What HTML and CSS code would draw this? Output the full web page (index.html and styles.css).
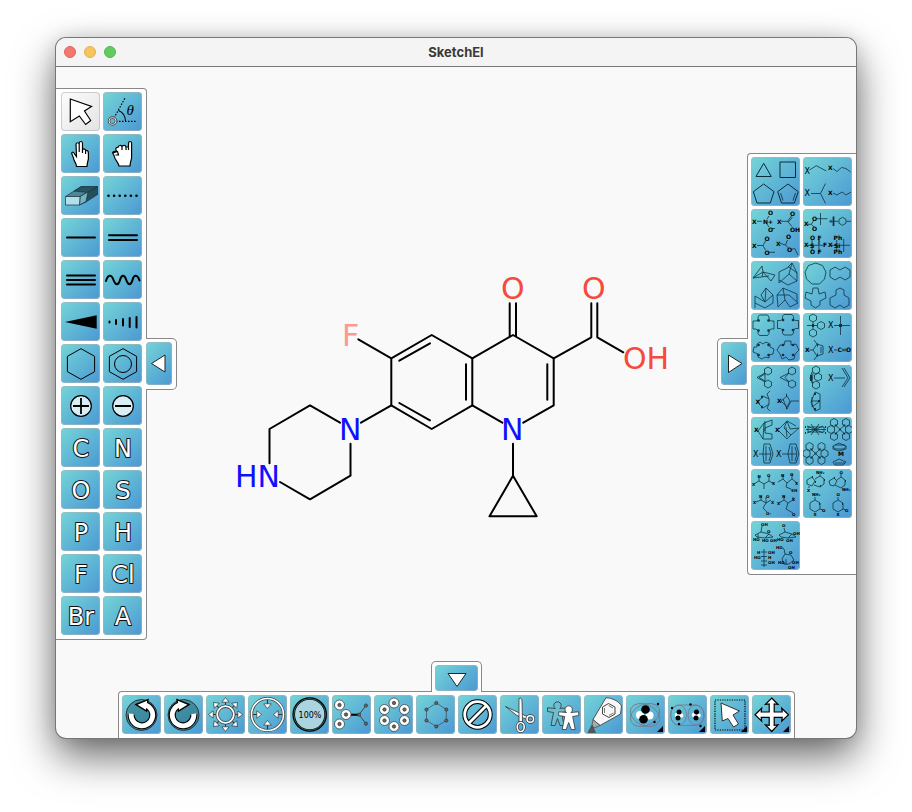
FILE: index.html
```html
<!DOCTYPE html>
<html lang="en">
<head>
<meta charset="utf-8">
<title>SketchEl</title>
<link rel="stylesheet" href="styles.css">
</head>
<body>
<svg class="defs" width="0" height="0" aria-hidden="true">
  <defs>
    <symbol id="out" viewBox="0 0 39 39" overflow="visible"><path d="M19.5 11.500V7" stroke="#333"/><path d="M19.500 2.500l3.600 4.700h-7.200z" fill="#fff" stroke="#333" stroke-width=".7"/></symbol>
    <symbol id="in" viewBox="0 0 39 39" overflow="visible"><path d="M19.500 4v6" stroke="#333" stroke-width="1.200"/><path d="M19.500 13.500l3.800-4.700h-7.600z" fill="#fff" stroke="#333" stroke-width=".7"/></symbol>
    <g id="atom"><circle r="5" fill="#fff" stroke="#444" stroke-width=".8"/><circle r="1.700" fill="#666" stroke="#222" stroke-width=".6"/></g>
    <circle id="dot" r="1.600" fill="#666" stroke="#222" stroke-width=".6"/>
    <path id="more" d="M37 31v6h-6z" fill="#000" stroke="none"/>
    <path id="hex" d="M0-4l3.500 2v4l-3.500 2l-3.500-2v-4z"/>
    <path id="person" d="M-2.200 4.500L-10 3.800V7.500L-4 8.500L-6.500 21.500H-2.500L0 14.500L2.500 21.500H6.500L4 8.500L10 7.500V3.800L2.200 4.500A3.700 3.700 0 1 0-2.200 4.500z"/>
    <path id="crown" d="M-4-10.500h8l1.500 2v3l2 1h3v8h-3l-2 1.500v3l-1.500 2h-8l-1.500-2v-3l-2-1.500h-3v-8h3l2-1v-3z"/>
    <path id="od" d="M-5-5h.1M5-5h.1M-5 5h.1M5 5h.1" stroke-width="2.600" stroke-linecap="round"/>
    <g id="porph"><use href="#hex" x="-6" y="-7"/><use href="#hex" x="6" y="-7"/><use href="#hex" x="-6" y="7"/><use href="#hex" x="6" y="7"/><use href="#hex" x="-9" y="0"/><use href="#hex" x="9" y="0"/><path d="M-5-5L5 5M5-5L-5 5"/><path d="M-4-4h.1M4-4h.1M-4 4h.1M4 4h.1M0 0h.1" stroke-width="2" stroke-linecap="round"/></g>
  </defs>
</svg>

<div class="window">
  <header class="titlebar">
    <div class="lights"><span class="light red"></span><span class="light amber"></span><span class="light green"></span></div>
    <h1>SketchEl</h1>
  </header>

  <main class="stage">
    <section class="dock dock-left" aria-label="Tools">
      <div class="panel tools">
        <button class="tool selected" aria-label="Select"><svg viewBox="0 0 39 39"><path d="M9.300 7L30.500 14.500L23.500 19L29.700 28.500L24.700 32.500L18.300 24L9.300 29.700z" fill="#fff" stroke-width="1.200"/></svg></button>
        <button class="tool" aria-label="Rotate"><svg viewBox="0 0 39 39"><path d="M11 26L22.300 5.500M13 29.300H34" stroke-width="1.200" stroke-dasharray="1.500 1.500"/><path d="M15.500 18.500Q22 21 22.500 29" stroke-width="1.100"/><circle cx="9.500" cy="29" r="3.500" stroke="#444" stroke-width="2.400"/><circle cx="9.500" cy="29" r="3.500" stroke="#ddd"/><text class="theta" x="23.500" y="23">θ</text></svg></button>
        <button class="tool" aria-label="Pan"><svg viewBox="0 0 39 39"><path d="M15.500 32.500C15.500 29 12.500 27 12.500 24L10.700 19.500C11 17.500 13 18 13.600 20L15.500 22.500L15 10C15.300 8.300 17.800 8.300 18.200 10V9C18.500 7 21.200 7 21.500 9V15.500C23 14.500 24.500 15 24.600 16.500C26 16 27.400 17 27.400 19V25C26.500 28 26 30 26 32.500zM18.200 10V18M21.500 15V19M24.600 16.500V20" fill="#fff" stroke-width="1.200"/></svg></button>
        <button class="tool" aria-label="Drag"><svg viewBox="0 0 39 39"><path d="M16 32C15.500 28 11.500 26 11 21.500L9.600 18.700C10 17 12 17.500 13.500 17C12 15 13 13 15 13.300C15.500 11 18 11 19 12.500C20 11 22.500 11 23 12.800L25.500 13V9C26 7 28.400 7 28.600 9V24C28 27 27 29 27 32zM19 12.500V16M23 12.800V16M25.500 13V16M10 19L14.500 17.500L15.500 21L12.500 21" fill="#fff" stroke-width="1.200"/></svg></button>
        <button class="tool" aria-label="Erase"><svg viewBox="0 0 39 39"><g stroke="#17323d" stroke-width=".7"><path d="M4.500 20.500L20 10.700H36.500L21 20.500z" fill="#4f8796"/><path d="M13 15L20 10.700H36.500L27 16.500z" fill="#275462"/><path d="M19 20.500L27 16L36.500 10.700V18.500L25 26L18.500 29z" fill="#24505c"/><path d="M19 20.500L27 16L25 25.500L18.500 29z" fill="#73b3c2"/><path d="M4.500 20.500H19L18.500 29H4.500z" fill="#b2e0ea"/></g></svg></button>
        <button class="tool" aria-label="Zero order bond"><svg viewBox="0 0 39 39"><path d="M5.500 19.700H35" stroke-width="2.600" stroke-linecap="round" stroke-dasharray="0 5.600"/></svg></button>
        <button class="tool" aria-label="Single bond"><svg viewBox="0 0 39 39"><path class="bond" d="M6 19.500H34"/></svg></button>
        <button class="tool" aria-label="Double bond"><svg viewBox="0 0 39 39"><path class="bond" d="M6 17.300H34M6 22H34"/></svg></button>
        <button class="tool" aria-label="Triple bond"><svg viewBox="0 0 39 39"><path class="bond" d="M6 15.500H34M6 20H34M6 24.500H34"/></svg></button>
        <button class="tool" aria-label="Unknown stereo"><svg viewBox="0 0 39 39"><path class="bond" d="M3 21C5 14.300 8.500 14.300 10.500 20S15.500 25.700 17 20S21.500 14.300 23.300 20S28 25.700 29.500 20S34.500 14.300 36.500 20.500"/></svg></button>
        <button class="tool" aria-label="Wedge bond"><svg viewBox="0 0 39 39"><path d="M4 20L35.700 13.300V26.700z" fill="#000" stroke="none"/></svg></button>
        <button class="tool" aria-label="Hashed bond"><svg viewBox="0 0 39 39"><path class="bond" d="M6.500 19.500v1M13 18v4M20 17v6.500M26.700 16v9M33.500 15v10.500"/></svg></button>
        <button class="tool" aria-label="Ring"><svg viewBox="0 0 39 39"><path d="M20 4.700L33.600 12.300V27.700L20 35.300L6.400 27.700V12.300z"/></svg></button>
        <button class="tool" aria-label="Aromatic ring"><svg viewBox="0 0 39 39"><path d="M20 4.700L33.600 12.300V27.700L20 35.300L6.400 27.700V12.300z"/><circle cx="20" cy="20" r="8.500"/></svg></button>
        <button class="tool" aria-label="Increase charge"><svg viewBox="0 0 39 39"><circle cx="20" cy="20" r="10.300" fill="#d7eef4" stroke-width="1.200"/><path d="M12 20H28M20 12V28" stroke-width="1.800"/></svg></button>
        <button class="tool" aria-label="Decrease charge"><svg viewBox="0 0 39 39"><circle cx="20" cy="20" r="10.300" fill="#d7eef4" stroke-width="1.200"/><path d="M12 20H28" stroke-width="1.800"/></svg></button>
        <button class="tool"><svg viewBox="0 0 39 39"><text class="element" x="20" y="29">C</text></svg></button>
        <button class="tool"><svg viewBox="0 0 39 39"><text class="element" x="20" y="29">N</text></svg></button>
        <button class="tool"><svg viewBox="0 0 39 39"><text class="element" x="20" y="29">O</text></svg></button>
        <button class="tool"><svg viewBox="0 0 39 39"><text class="element" x="20" y="29">S</text></svg></button>
        <button class="tool"><svg viewBox="0 0 39 39"><text class="element" x="20" y="29">P</text></svg></button>
        <button class="tool"><svg viewBox="0 0 39 39"><text class="element" x="20" y="29">H</text></svg></button>
        <button class="tool"><svg viewBox="0 0 39 39"><text class="element" x="20" y="29">F</text></svg></button>
        <button class="tool"><svg viewBox="0 0 39 39"><text class="element" x="20" y="29">Cl</text></svg></button>
        <button class="tool"><svg viewBox="0 0 39 39"><text class="element" x="20" y="29">Br</text></svg></button>
        <button class="tool"><svg viewBox="0 0 39 39"><text class="element" x="20" y="29">A</text></svg></button>
      </div>
      <div class="tab"><button class="toggle" aria-label="Hide tools"><svg viewBox="0 0 26 43"><path d="M5.500 21.500L19 13V30z" fill="#fff" stroke="#222"/></svg></button></div>
    </section>

    <svg class="molecule" viewBox="177 67 540 594" role="img" aria-label="Molecule">
      <g class="bonds">
        <path d="M358.300 339.300L391.300 358.300L431.700 335L472.300 358.300V405.300L431.700 429L391.300 405.300V358.300"/>
        <path d="M399.300 360.700L430 343.300M399.300 403L430 420.300M466 364.300V399.700"/>
        <path d="M391.300 405.300L361 422.700M350.500 443.700V475.700L310 499.300L280 482M269.500 463.300V429L310 405.300L340 422.700"/>
        <path d="M472.300 358.300L513 335L553.700 358.300V405.300L523.300 422.700M502.300 422.700L472.300 405.300M547.300 364.300V399.700"/>
        <path d="M509.700 303.300V336M516 303.300V336M553.700 358.300L591.300 337.300V303.300M597.300 303.300V337.300L623.300 352.300"/>
        <path d="M513 443.700V475.700L489.500 516.300H536.700L513 475.700"/>
      </g>
      <text class="atom fluorine" x="342" y="346">F</text>
      <text class="atom nitrogen" x="339" y="440">N</text>
      <text class="atom nitrogen" x="235" y="487">HN</text>
      <text class="atom nitrogen" x="501" y="440">N</text>
      <text class="atom oxygen" x="501" y="299">O</text>
      <text class="atom oxygen" x="582" y="299">O</text>
      <text class="atom oxygen" x="623" y="369">OH</text>
    </svg>

    <section class="dock dock-right" aria-label="Templates">
      <div class="tab"><button class="toggle" aria-label="Hide templates"><svg viewBox="0 0 26 43"><path d="M7.500 13L21 21.500L7.500 30.500z" fill="#fff" stroke="#222"/></svg></button></div>
      <div class="panel templates">
        <button class="tool" aria-label="Small rings"><svg viewBox="0 0 49 49"><path d="M12.700 6.300L5 19.500H20.300z"/><path d="M29 5H44.500V20.500H29z"/><path d="M12.700 27L23 34.700L19.300 46H6L2.300 34.700zM37 27L47.300 34.700L43.300 46H30.500L26.700 34.700z"/><path d="M32 43.500L29.500 36M42 43.500L44.500 36" stroke-width=".8"/></svg></button>
        <button class="tool" aria-label="Chains"><svg viewBox="0 0 49 49" class="fine"><path d="M6.500 13L13.300 8.700L23.300 14M30 11.500L34 14.500L38.500 10.500L43 11.500L47.500 15M8 36.500H17.500L22.500 26.500M17.500 36.500L22.500 46.500M30 36L34 38L39 35L43 38L48 35"/><text class="large" x="1.500" y="17">X</text><text x="25" y="13">X</text><text class="large" x="1.500" y="39">X</text><text x="25" y="38">X</text></svg></button>
        <button class="tool" aria-label="Functional groups"><svg viewBox="0 0 49 49" class="fine"><path d="M6 12.300H11M16 10L18 7M16 15L18 18M21 19.500H24M30 12.300H36.500L40.500 7M36.500 12.300L41 17.500M37.500 13L41.500 8M6 36.500H12L14.500 32M12 36.500L14.500 41M17 43.300H24M29 34.300L34.500 36L36.500 31M34.500 36L37.500 39M40 40.500L43.700 39.500L47 46"/><text x="1" y="14.500">X</text><text x="12" y="14.500">N+</text><text x="17" y="6">O</text><text x="17" y="23">O</text><text x="26" y="14.500">X</text><text x="39" y="7">O</text><text x="39" y="23">OH</text><text x="1" y="39">X</text><text x="13.500" y="32">O</text><text x="13.500" y="46">O</text><text x="25" y="37">X</text><text x="35" y="30">O</text><text x="36" y="43">O</text></svg></button>
        <button class="tool" aria-label="Protecting groups"><svg viewBox="0 0 49 49" class="fine"><path d="M5 15.300H8.300L11 11M8.300 15.300L11 18M13 9.700H24.500M17.500 4V16M26 12.300H35.500M28 10.500V14M43.500 12.300H48M5 36.300H16V30V43M9 31V42M17 36.300H20M28 36.300H47M33.700 31V42M40.700 30V43"/><path d="M30.500 7.500V17" stroke-width="1.800"/><use href="#hex" x="39.500" y="12.300"/><text x="1" y="17">X</text><text x="9" y="11.500">O</text><text x="9" y="22">O</text><text x="1" y="38">X</text><text x="7" y="38.500">S</text><text x="7" y="31">O</text><text x="7" y="45">O</text><text x="14.500" y="31">F</text><text x="14.500" y="45">F</text><text x="20" y="38">F</text><text x="25" y="38">X</text><text x="31" y="38.500">Si</text><text x="30.500" y="31">Ph</text><text x="30.500" y="45">Ph</text></svg></button>
        <button class="tool" aria-label="Bridged rings"><svg viewBox="0 0 49 49" class="fine"><path d="M2 17L11 5L12 11L24 14L20 20L12 11L2 17L18 15M12 11L11 16M28 22V11L38 6L46 12V20L37 24L28 19M28 22L38 13L46 20M41 2L38 13M41 2L37 6M41 2L46 12M4 47V35L14 41L22 34V42L14 47L4 42M15 27L14 41M15 27L22 34M15 27L10 34L14 41M26 34L32 27L34 39L27 46L26 34L38 34L47 42L39 46L34 39M32 27L46 33V41"/></svg></button>
        <button class="tool" aria-label="Large rings"><svg viewBox="0 0 49 49" class="fine"><path d="M12.700 2L19.500 4.500L23 11L21.500 18L16.500 23H9L3.500 18L2 11L5.500 4.500zM27 9L32 6L37 9L42 6L47 9V16L42 19L37 16L32 19L27 16zM9 33L10 27H15L16 33L22 31L23 37L17 40L17 44L12.500 47L8 44V40L2 37L3 31zM33 29L37 27L41 29V34L46 37V44L41 47L37 44L32 47L27 44V37L33 34z"/></svg></button>
        <button class="tool" aria-label="Crown ethers"><svg viewBox="0 0 49 49" class="fine"><use href="#crown" x="12.500" y="12.500"/><use href="#od" x="12.500" y="12.500"/><use href="#crown" x="37" y="12"/><use href="#od" x="37" y="12"/><path d="M6 31L9 29L12 31L15 29L19 31V34L23 36L22 41L18 42V45L14 44L11 46L7 44V41L2 39L3 34L6 34zM34 28H40V32L45 31L48 37L44 41L43 46L38 47L35 44L31 46L29 41L26 37L29 32L33 32z"/><use href="#od" x="12.500" y="37"/><use href="#od" x="37" y="37"/></svg></button>
        <button class="tool" aria-label="Ligands"><svg viewBox="0 0 49 49" class="fine"><use href="#hex" x="10" y="5"/><use href="#hex" x="18" y="12.500"/><use href="#hex" x="10" y="20"/><path d="M4 12.500H14M10 9V16M31 12.500H47M37.500 3V22M6 37H10L14 31L20 33V41L14 43L10 37M14 31L11 27M14 43L11 47M18 34V40M31 37H34M39 36.300H43M39 37.700H43"/><path d="M9 12.500H11M36 12.500H39M14 32H15M14 42H15" stroke-width="3"/><text class="large" x="25" y="15">X</text><text x="2" y="39">X</text><text class="large" x="25" y="39.500">X</text><text x="34.500" y="39">C</text><text x="43" y="39">O</text></svg></button>
        <button class="tool" aria-label="Chelates"><svg viewBox="0 0 49 49" class="fine"><use href="#hex" x="17" y="6"/><use href="#hex" x="17" y="19"/><path d="M14 8L6 12.500L14 17M14 9L8 12.500L14 16M14 8V17"/><use href="#hex" x="41" y="6"/><use href="#hex" x="41" y="19"/><path d="M38 8L29 12.500L38 17M38 8L34 12.500L38 17M8 36L12 31L18 34V39L12 43L8 39M18 34L16 29L19 26M18 39L16 43L19 46M30 36L36 31L39 36L36 42L30 36M32 34L36 44L40 36H48"/><path d="M10 32H12M10 42H12M35 30H36M35 43H36" stroke-width="2.500"/><text x="4.500" y="39">X</text><text x="26" y="38">X</text></svg></button>
        <button class="tool" aria-label="Pincers"><svg viewBox="0 0 49 49" class="fine"><use href="#hex" x="13" y="5"/><use href="#hex" x="15" y="12"/><use href="#hex" x="13" y="20"/><path d="M9 7L7 13L10 19M10 8L9 18M31 13H42M39 3L45 13L39 22M41 3L47 13L41 22M12 27L17 29V44L12 46L8 37L12 27M9 32V42L17 36H8"/><path d="M8 10V16M12 28V30M12 43V45M15 36H17" stroke-width="2"/><text class="large" x="25" y="15.500">X</text></svg></button>
        <button class="tool" aria-label="Haptic ligands"><svg viewBox="0 0 49 49" class="fine"><path d="M7 14L13 6L21 3V8L14 11V16L21 17V22L12 22L7 14M13 6L12 22M14 4V14M28 12L36 4L39 12L48 11L40 18L36 22L28 14M36 4L38 5L45 9M36 4L33 11L40 18M35 10L36 20M8 37H20M13 27H19L22 37L19 46H13L12 37zM15 29V44M18 30L20 37L18 44M31 37H46M39 27H45L48 37L45 46H39L37 37zM41 29V44M44 30L46 37L44 44"/><text x="3" y="15">X</text><text x="24" y="15">X</text><text class="large" x="2" y="39.500">X</text><text class="large" x="25" y="39.500">X</text></svg></button>
        <button class="tool" aria-label="Porphyrins"><svg viewBox="0 0 49 49" class="fine"><path d="M4 9L20 16M4 16L20 9M3 12.500H23M8 7L16 18M8 18L16 7M5 10H21V15H5z"/><path d="M2 10H3M2 16H3M22 10H23M22 16H23M11 12.500H14" stroke-width="2"/><use href="#porph" x="37" y="12.500"/><use href="#porph" x="12.500" y="36.500"/><path d="M30 29L36 26L43 29L41 32H32zM32 28H42M30 45L36 42L43 45L40 48H32zM32 46H42M30 29V32L36 34L43 32V29"/><text x="35" y="39">M</text></svg></button>
        <button class="tool" aria-label="Amino acids"><svg viewBox="0 0 49 49" class="fine"><path d="M3 15L8 12L13 15L18 12L23 15M8 12V8M13 15V20M18 12V7M27 13L32 10L36 14L41 10L46 14M32 10V6M36 14L35 18L40 20M41 10V5M5 33L10 31L15 34L20 31M10 31V27M15 34L12 39L16 43M15 34V28M28 34L33 31L37 34L42 31M33 31V27M37 34L35 40L42 44M42 31V28"/><g class="small"><text x="1" y="17">X</text><text x="6.500" y="9">N</text><text x="16" y="8">O</text><text x="21" y="16">X</text><text x="30" y="8">N</text><text x="39" y="7">O</text><text x="44" y="16">X</text><text x="40" y="23">SH</text><text x="2" y="35">X</text><text x="8" y="29">N</text><text x="15" y="29">O</text><text x="20" y="35">X</text><text x="15" y="46">O-</text><text x="26" y="36">X</text><text x="31" y="29">N</text><text x="41" y="32">X</text><text x="41" y="47">O</text></g></svg></button>
        <button class="tool" aria-label="Nucleobases"><svg viewBox="0 0 49 49" class="fine"><path d="M4 11L9 8L12 12L9 17L4 15zM12 10L17 7L21 10V15L17 18L11 16M17 7V5M6 17V19M26 12L31 9L34 12L31 17L27 16zM34 11L38 8L42 11V16L38 19L32 16M38 8V5M12 31L17 34V40L12 43L7 40V34zM12 31V28M17 40L20 41M35 31L40 34V40L35 43L30 40V34zM35 31V28M40 40L43 41"/><g class="small"><text x="13" y="5">NH₂</text><text x="36.500" y="5">O</text><text x="39" y="22">NH₂</text><text x="9" y="27">NH₂</text><text x="33.500" y="27">O</text><text x="19" y="43">O</text><text x="42" y="43">O</text><text x="4" y="23">X</text><text x="10.500" y="47">X</text><text x="33.500" y="47">X</text></g><path d="M9 8h1M12 13h1M21 11h1M17 17h1M31 9h1M42 12h1M16 35h1M39 35h1" stroke-width="2"/></svg></button>
        <button class="tool" aria-label="Sugars"><svg viewBox="0 0 49 49" class="fine"><path d="M4 14L10 11L18 13L22 16L14 17L6 16zM10 11L11 5M7 13V17M18 13L14 17M28 14L34 11L41 13L45 16L37 17L30 16zM34 11L33 7M41 13L37 17M13 28V46M10 31H16M10 35.500H16M10 40H16M10 44H16M34 33L33 28L32 27M31 38L34 33L40 34L43 39L38 43H33L31 38M35 38V44"/><g class="small"><text x="10" y="5">OH</text><text x="2" y="20">HO</text><text x="16" y="12">O</text><text x="11" y="21">HO</text><text x="19" y="21">OH</text><text x="31" y="6">O</text><text x="26" y="20">HO</text><text x="35" y="21">OH</text><text x="42" y="14">OH</text><text x="6" y="33">H</text><text x="17" y="33">OH</text><text x="3" y="38">HO</text><text x="17" y="38">H</text><text x="17" y="43">OH</text><text x="25" y="28">HO</text><text x="38" y="33">O</text><text x="27" y="43">HO</text><text x="41" y="43">OH</text><text x="37" y="48">OH</text></g></svg></button>
      </div>
    </section>
  </main>

  <section class="dock dock-bottom" aria-label="Commands">
    <div class="tab"><button class="toggle" aria-label="Hide commands"><svg viewBox="0 0 43 26"><path d="M13 8.500H31L22 21.500z" fill="#fff" stroke="#222"/></svg></button></div>
    <div class="panel commands">
      <button class="tool" aria-label="Undo"><svg viewBox="0 0 39 39"><circle cx="19.500" cy="20" r="15.500" fill="#27707f" fill-opacity=".6" stroke="#333"/><path d="M9.200 19.500A10.800 10.800 0 1 0 24 10" stroke-width="7"/><path d="M14 9.500L26 4.500L24.500 16z" fill="#fff" stroke-width="1.400"/><path d="M9.200 18.800A10.800 10.800 0 1 0 23 9.700" stroke="#fff" stroke-width="4.800"/></svg></button>
      <button class="tool" aria-label="Redo"><svg viewBox="0 0 39 39"><g transform="matrix(-1 0 0 1 39 0)"><circle cx="19.500" cy="20" r="15.500" fill="#27707f" fill-opacity=".6" stroke="#333"/><path d="M9.200 19.500A10.800 10.800 0 1 0 24 10" stroke-width="7"/><path d="M14 9.500L26 4.500L24.500 16z" fill="#fff" stroke-width="1.400"/><path d="M9.200 18.800A10.800 10.800 0 1 0 23 9.700" stroke="#fff" stroke-width="4.800"/></g></svg></button>
      <button class="tool" aria-label="Zoom in"><svg viewBox="0 0 39 39"><g id="out4"><use href="#out" width="39" height="39"/><use href="#out" width="39" height="39" transform="rotate(90 19.500 19.500)"/><use href="#out" width="39" height="39" transform="rotate(180 19.500 19.500)"/><use href="#out" width="39" height="39" transform="rotate(270 19.500 19.500)"/></g><use href="#out4" transform="rotate(45 19.500 19.500)"/><circle cx="19.500" cy="19.500" r="8.300" stroke="#444" stroke-width="3.400"/><circle cx="19.500" cy="19.500" r="8.300" stroke="#fff" stroke-width="1.800"/></svg></button>
      <button class="tool" aria-label="Zoom out"><svg viewBox="0 0 39 39"><use href="#in" width="39" height="39"/><use href="#in" width="39" height="39" transform="rotate(90 19.500 19.500)"/><use href="#in" width="39" height="39" transform="rotate(180 19.500 19.500)"/><use href="#in" width="39" height="39" transform="rotate(270 19.500 19.500)"/><circle cx="19.500" cy="19.500" r="16" stroke="#444" stroke-width="3"/><circle cx="19.500" cy="19.500" r="16" stroke="#fff" stroke-width="1.600"/></svg></button>
      <button class="tool" aria-label="Zoom full"><svg viewBox="0 0 39 39"><circle cx="19.700" cy="19.500" r="16" fill="#a9d4e0" stroke-width="2.600"/><circle cx="19.700" cy="19.500" r="15.900" stroke="#6ba" stroke-width=".5"/><text class="percent" x="20" y="23">100%</text></svg></button>
      <button class="tool" aria-label="Grow selection"><svg viewBox="0 0 39 39"><path d="M19 19.700H27" stroke-width="2"/><path d="M27 19.700L34 10.500M27 19.700L34 28.700" stroke="#444"/><use href="#atom" x="7.500" y="10"/><use href="#atom" x="7.500" y="29"/><use href="#atom" x="14" y="19.500"/><use href="#dot" x="27" y="19.700"/><use href="#dot" x="34" y="10.500"/><use href="#dot" x="34" y="28.700"/></svg></button>
      <button class="tool" aria-label="Select all"><svg viewBox="0 0 39 39"><use href="#atom" x="20" y="8"/><use href="#atom" x="30.500" y="14.500"/><use href="#atom" x="30.500" y="25.500"/><use href="#atom" x="20" y="31.500"/><use href="#atom" x="10.500" y="25.500"/><use href="#atom" x="10.500" y="14.500"/></svg></button>
      <button class="tool" aria-label="Clear selection"><svg viewBox="0 0 39 39"><path d="M20.300 8L30.300 14.500V25.500L20.300 31.500L10.500 25.500V14.500z" stroke="#445" stroke-width=".7"/><use href="#dot" x="20.300" y="8"/><use href="#dot" x="30.300" y="14.500"/><use href="#dot" x="30.300" y="25.500"/><use href="#dot" x="20.300" y="31.500"/><use href="#dot" x="10.500" y="25.500"/><use href="#dot" x="10.500" y="14.500"/></svg></button>
      <button class="tool" aria-label="Delete"><svg viewBox="0 0 39 39"><circle cx="19.500" cy="19.500" r="12.800" stroke-width="4.800"/><path d="M11 28L28 11" stroke-width="5"/><circle cx="19.500" cy="19.500" r="12.800" stroke="#fff" stroke-width="2.800"/><path d="M10.500 28.500L28.500 10.500" stroke="#fff" stroke-width="2.800"/></svg></button>
      <button class="tool" aria-label="Cut"><svg viewBox="0 0 39 39"><g stroke="#333" stroke-width=".8" fill="#fff"><path d="M5.500 11.500L27 21.500L26 24L17 20.500z"/><path d="M19 3.500C21 2.500 22 4 22 6L22.500 27H19z"/></g><g stroke="#333" stroke-width="3"><ellipse cx="20.700" cy="32" rx="3.500" ry="4.500"/><circle cx="30.300" cy="24" r="3.300"/></g><g stroke="#fff" stroke-width="1.600"><ellipse cx="20.700" cy="32" rx="3.500" ry="4.500"/><circle cx="30.300" cy="24" r="3.300"/></g></svg></button>
      <button class="tool" aria-label="Copy"><svg viewBox="0 0 39 39"><use href="#person" x="15.500" y="9" fill="#6cbfd1" stroke="#333" stroke-width=".8"/><use href="#person" x="26.700" y="13" fill="#fff" stroke="#333" stroke-width=".8"/></svg></button>
      <button class="tool" aria-label="Paste"><svg viewBox="0 0 39 39"><path d="M22 2.700C28 3 35 6 37.500 11L36.500 19L16 30.500L9 24.500z" fill="#f7f7f7" stroke="#444" stroke-width=".9"/><path d="M9 24.500L16 30.500L10 33L8 30z" fill="#aaa" stroke="#444" stroke-width=".7"/><path d="M8 30L11.500 37.500H4z" fill="#555" stroke="#444" stroke-width=".6"/><path d="M24.500 8.500L31 12L31 19L25 22.500L18.500 19V12z" stroke="#444"/><path d="M24.500 10.500L29 13M20.500 13V18M25 20.500L29.500 18" stroke="#444" stroke-width=".7"/></svg></button>
      <button class="tool" aria-label="Atom menu"><svg viewBox="0 0 39 39"><g stroke="#778" stroke-width=".8"><ellipse cx="19" cy="20" rx="15.500" ry="10.500" transform="rotate(25 19 20)"/><ellipse cx="19" cy="20" rx="15.500" ry="10.500" transform="rotate(-25 19 20)"/></g><g stroke="none"><circle cx="14" cy="20" r="4" fill="#fff"/><circle cx="23.500" cy="20.500" r="4" fill="#fff"/><circle cx="19.500" cy="14.500" r="4.300" fill="#000"/><circle cx="17.500" cy="24.300" r="4.300" fill="#000"/><circle cx="32" cy="9" r="1.200" fill="#000"/><circle cx="28.500" cy="27" r="1.200" fill="#000"/></g><use href="#more"/></svg></button>
      <button class="tool" aria-label="Bond menu"><svg viewBox="0 0 39 39"><g stroke="#778" stroke-width=".8"><ellipse cx="10.500" cy="20" rx="8" ry="10"/><ellipse cx="28" cy="20" rx="8" ry="10"/><rect x="3" y="10" width="33" height="20.500" rx="9"/></g><g stroke="none"><circle cx="9" cy="20" r="2.300" fill="#fff"/><circle cx="13" cy="20.500" r="2.300" fill="#fff"/><circle cx="11" cy="17" r="2.500" fill="#000"/><circle cx="10" cy="23" r="2.500" fill="#000"/><circle cx="26" cy="20" r="2.300" fill="#fff"/><circle cx="30.500" cy="20.500" r="2.300" fill="#fff"/><circle cx="28.500" cy="17" r="2.500" fill="#000"/><circle cx="28" cy="23" r="2.500" fill="#000"/><circle cx="4" cy="13" r="1.200" fill="#000"/><circle cx="22.500" cy="9.500" r="1.200" fill="#000"/><circle cx="11" cy="29" r="1.200" fill="#000"/><circle cx="32.500" cy="31" r="1.200" fill="#000"/></g><use href="#more"/></svg></button>
      <button class="tool" aria-label="Selection menu"><svg viewBox="0 0 39 39"><rect x="5" y="5" width="30" height="30" stroke-width="1.200" stroke-dasharray="1.200 1.200"/><path d="M11 8L29.500 16L23 20L28.500 29L23.500 32L18 23.500L12.300 26z" fill="#fff" stroke="#333"/><use href="#more"/></svg></button>
      <button class="tool" aria-label="Move menu"><svg viewBox="0 0 39 39"><path d="M19.700 3L26 9.500L22.200 9V17H30.200L29.700 13.200L36.500 19.700L29.700 26.200L30.200 22.400H22.200V30.300L26 29.800L19.700 36.500L13.400 29.800L17.200 30.300V22.400H9.200L9.700 26.200L3 19.700L9.700 13.200L9.200 17H17.200V9L13.400 9.500z" fill="#fff" stroke-width="1.200"/><use href="#more"/></svg></button>
    </div>
  </section>
</div>
</body>
</html>
```
FILE: styles.css
```css
* {
  box-sizing: border-box;
}

body {
  margin: 0;
  background: #fff;
  font-family: Inter, "Liberation Sans", sans-serif;
  overflow: hidden;
}

.defs {
  position: absolute;
}

.window {
  display: flex;
  flex-direction: column;
  min-height: calc(100vh - 112px);
  margin: 38px 56px 74px;
  background: #f9f9f9;
  border-radius: 10px;
  box-shadow: 0 0 0 1px #777, 0 18px 42px rgba(0, 0, 0, 0.6), 0 0 18px rgba(0, 0, 0, 0.12);
  overflow: hidden;
}

.titlebar {
  display: grid;
  grid-template-columns: 1fr auto 1fr;
  align-items: center;
  height: 29px;
  padding: 0 8px;
  background: #f4f4f4;
  border-bottom: 1px solid #777;
}

.titlebar h1 {
  margin: 0;
  font-size: 13px;
  font-weight: 700;
  line-height: 16px;
  color: #3a3a3a;
}

.lights {
  display: flex;
  gap: 8px;
}

.light {
  width: 12px;
  height: 12px;
  border: 1px solid #e0665c;
  border-radius: 50%;
  background: #f4776d;
}

.light.amber {
  border-color: #e3b04e;
  background: #f7c560;
}

.light.green {
  border-color: #52b853;
  background: #62cb60;
}

.stage {
  display: flex;
  flex: 1;
}

.molecule {
  flex: 1;
  min-width: 0;
}

.dock {
  display: flex;
  align-items: center;
}

.dock-bottom {
  flex-direction: column;
  padding-left: 1px;
}

.panel {
  display: grid;
  gap: 3px;
  background: #fff;
  border: 1px solid #888;
}

.tools {
  grid-template-columns: repeat(2, 39px);
  grid-auto-rows: 39px;
  padding: 3px 4px 4px 5px;
  border-left: 0;
  border-radius: 0 4px 4px 0;
}

.templates {
  grid-template-columns: repeat(2, 49px);
  grid-auto-rows: 49px;
  padding: 3px 4px 4px 3px;
  border-right: 0;
  border-radius: 4px 0 0 4px;
}

.commands {
  grid-template-columns: repeat(16, 39px);
  grid-auto-rows: 39px;
  padding: 3px 3px 4px;
  border-bottom: 0;
  border-radius: 4px 4px 0 0;
}

.tab {
  position: relative;
  display: flex;
  background: #fff;
  border: 1px solid #888;
}

.dock-left .tab {
  margin-left: -1px;
  padding: 3px 4px 4px 0;
  border-left: 0;
  border-radius: 0 5px 5px 0;
}

.dock-right .tab {
  margin-right: -1px;
  padding: 3px 1px 4px 3px;
  border-right: 0;
  border-radius: 5px 0 0 5px;
}

.dock-bottom .tab {
  margin-bottom: -1px;
  padding: 3px 3px 1px;
  border-bottom: 0;
  border-radius: 5px 5px 0 0;
}

.tool,
.toggle {
  display: flex;
  padding: 0;
  overflow: hidden;
  border: 0;
  border-radius: 4px;
  background: linear-gradient(135deg, #74d5d7, #4b98d3);
  box-shadow: inset 0 0 0 1px rgba(170, 180, 185, 0.6);
}

.toggle {
  width: 26px;
  height: 43px;
}

.dock-bottom .toggle {
  width: 43px;
  height: 26px;
}

.tool.selected {
  background: linear-gradient(135deg, #fdfdfd, #e3e3e3);
}

button svg {
  width: 100%;
  height: 100%;
  fill: none;
  stroke: #000;
}

.bond {
  stroke-width: 2;
  stroke-linecap: round;
}

.templates svg {
  stroke: #0a2c38;
  stroke-width: 1;
}

.templates .fine {
  stroke: #0f3442;
  stroke-width: 0.8;
}

.fine text {
  fill: #000;
  stroke: none;
  font-family: "DejaVu Sans", sans-serif;
  font-size: 6px;
  font-weight: 700;
}

.fine .small text {
  font-size: 4px;
}

.fine .large {
  font-size: 8px;
  font-weight: 400;
}

.element {
  fill: #fff;
  stroke: #111;
  stroke-width: 2px;
  stroke-linejoin: round;
  paint-order: stroke;
  text-anchor: middle;
  font-family: "DejaVu Sans", sans-serif;
  font-size: 24px;
}

.theta {
  fill: #000;
  stroke: none;
  font-family: "Liberation Serif", serif;
  font-size: 15px;
  font-style: italic;
}

.percent {
  fill: #000;
  stroke: none;
  text-anchor: middle;
  font-family: "DejaVu Sans", sans-serif;
  font-size: 8px;
}

.bonds {
  fill: none;
  stroke: #000;
  stroke-width: 2;
  stroke-linecap: round;
  stroke-linejoin: round;
}

.atom {
  font-family: "DejaVu Sans", sans-serif;
  font-size: 30px;
}

.nitrogen {
  fill: #1010ff;
}

.oxygen {
  fill: #f64a3c;
}

.fluorine {
  fill: #f99a95;
}
```
